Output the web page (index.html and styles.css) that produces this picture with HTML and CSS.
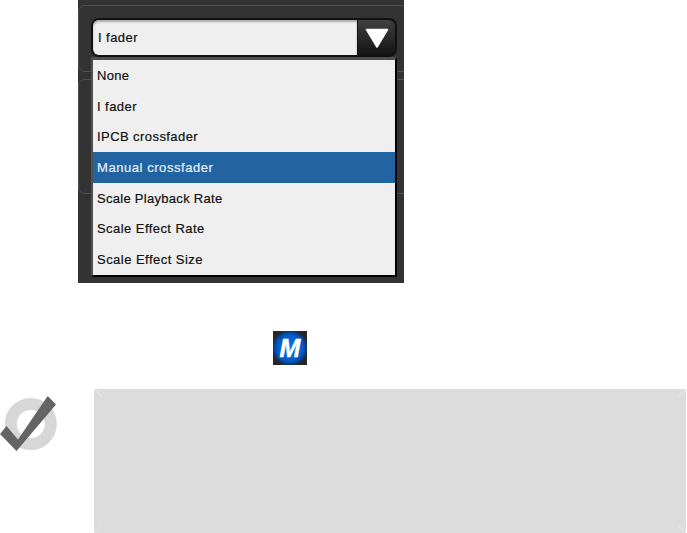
FILE: index.html
```
<!DOCTYPE html>
<html lang="en">
<head>
    <meta charset="utf-8">
    <title>Fader Options</title>
    <link rel="stylesheet" href="styles.css">
</head>
<body>
    <!-- Fader function dropdown -->
    <div class="panel">
        <div class="group group-main">
            <div class="select">
                <div class="select-value"><span class="t-ifader">I fader</span></div>
                <div class="select-button">
                    <svg width="24" height="20" viewBox="0 0 24 20"><path d="M1.5 1.5H22.5L12 19Z" fill="#fff" stroke="#fff" stroke-width="1.6" stroke-linejoin="round"/></svg>
                </div>
                <ul class="menu">
                    <li><span class="t-none">None</span></li>
                    <li><span class="t-ifader">I fader</span></li>
                    <li><span class="t-ipcb">IPCB crossfader</span></li>
                    <li class="selected"><span class="t-manual">Manual crossfader</span></li>
                    <li><span class="t-playback">Scale Playback Rate</span></li>
                    <li><span class="t-rate">Scale Effect Rate</span></li>
                    <li><span class="t-size">Scale Effect Size</span></li>
                </ul>
            </div>
        </div>
        <div class="group group-next"></div>
    </div>

    <div class="badge">M</div>

    <!-- Hint -->
    <div class="note">
        <svg class="note-icon" width="58" height="56" viewBox="0 0 58 56">
            <circle cx="30.8" cy="28" r="20" fill="none" stroke="#d7d7d7" stroke-width="12"/>
            <path d="M47.7 0L56 8.5L16.5 55L0 38L6.5 30L18 43.5Z" fill="#646464"/>
        </svg>
        <div class="note-box">
            <svg class="corners" width="592" height="144" viewBox="0 0 592 144"><path d="M0 0L8 8M592 0L584 8M592 144L584 136M0 144L8 136" stroke="#e9e9e9" stroke-width="1"/></svg>
        </div>
    </div>
</body>
</html>
```

FILE: styles.css
```
body {
    margin: 0;
    background: #fff;
    font-family: "Liberation Sans", Arial, sans-serif;
    overflow: hidden;
}

/* Dark panel */
.panel {
    width: 326px;
    height: 283px;
    margin-left: 78px;
    padding-top: 5px;
    box-sizing: border-box;
    background: #333;
    overflow: hidden;
}

.group {
    width: 340px;
    box-sizing: border-box;
    border: 1px solid #505050;
    border-radius: 7px;
}

.group-main {
    height: 67px;
    padding: 12px 0 0 12px;
}

.group-next {
    height: 115px;
    margin-top: 7px;
}

/* Select */
.select {
    position: relative;
    display: flex;
    width: 306px;
    height: 39px;
    box-sizing: border-box;
    border: 2px solid #111;
    border-radius: 8px;
    background: #111;
}

.select-value {
    display: flex;
    align-items: center;
    width: 264px;
    padding-left: 5px;
    box-sizing: border-box;
    background: #efefef;
    border-radius: 6px 0 0 6px;
    box-shadow: inset 0 2px 2px #aaa;
    font-size: 13px;
    color: #111;
}

.select-button {
    flex: 1;
    display: flex;
    justify-content: center;
    margin-left: 1px;
    padding-top: 8px;
    background: linear-gradient(#404040, #292929 50%, #151515);
    border-radius: 0 6px 6px 0;
}

/* Open list */
.menu {
    position: absolute;
    left: -2px;
    top: 37px;
    width: 306px;
    height: 220px;
    box-sizing: border-box;
    display: grid;
    grid-template-rows: repeat(7, 1fr);
    margin: 0;
    padding: 0;
    list-style: none;
    border: 2px solid #000;
    border-top: 3px solid #505050;
    border-left-color: #505050;
    background: #efefef;
    font-size: 13px;
    color: #111;
}

.menu li {
    display: flex;
    align-items: center;
    padding-left: 4px;
}

.menu .selected {
    background: #2264a1;
    color: #e8eef5;
}

.menu span,
.select-value span {
    white-space: nowrap;
    -webkit-text-stroke: 0.2px currentColor;
}

/* Label tracking */
.t-none { letter-spacing: 0.3px; }
.t-ifader { letter-spacing: 0.45px; }
.t-ipcb { letter-spacing: 0.43px; }
.t-manual { letter-spacing: 0.56px; }
.t-playback { letter-spacing: 0.29px; }
.t-rate { letter-spacing: 0.44px; }
.t-size { letter-spacing: 0.47px; }

.badge {
    width: 34px;
    height: 34px;
    margin: 48px 0 0 273px;
    background: radial-gradient(circle, #0874f0 0, #0759c4 13px, #063e8c 16px, #262626 18px);
    color: #fff;
    font-size: 25px;
    font-weight: bold;
    font-style: italic;
    line-height: 34px;
    text-align: center;
    -webkit-text-stroke: 0.5px #fff;
}

/* Note */
.note {
    display: flex;
    margin-top: 24px;
}

.note-icon {
    margin-top: 7px;
}

.note-box {
    width: 592px;
    height: 144px;
    margin-left: 36px;
    background: #dcdcdc;
}

.corners {
    display: block;
}
```
